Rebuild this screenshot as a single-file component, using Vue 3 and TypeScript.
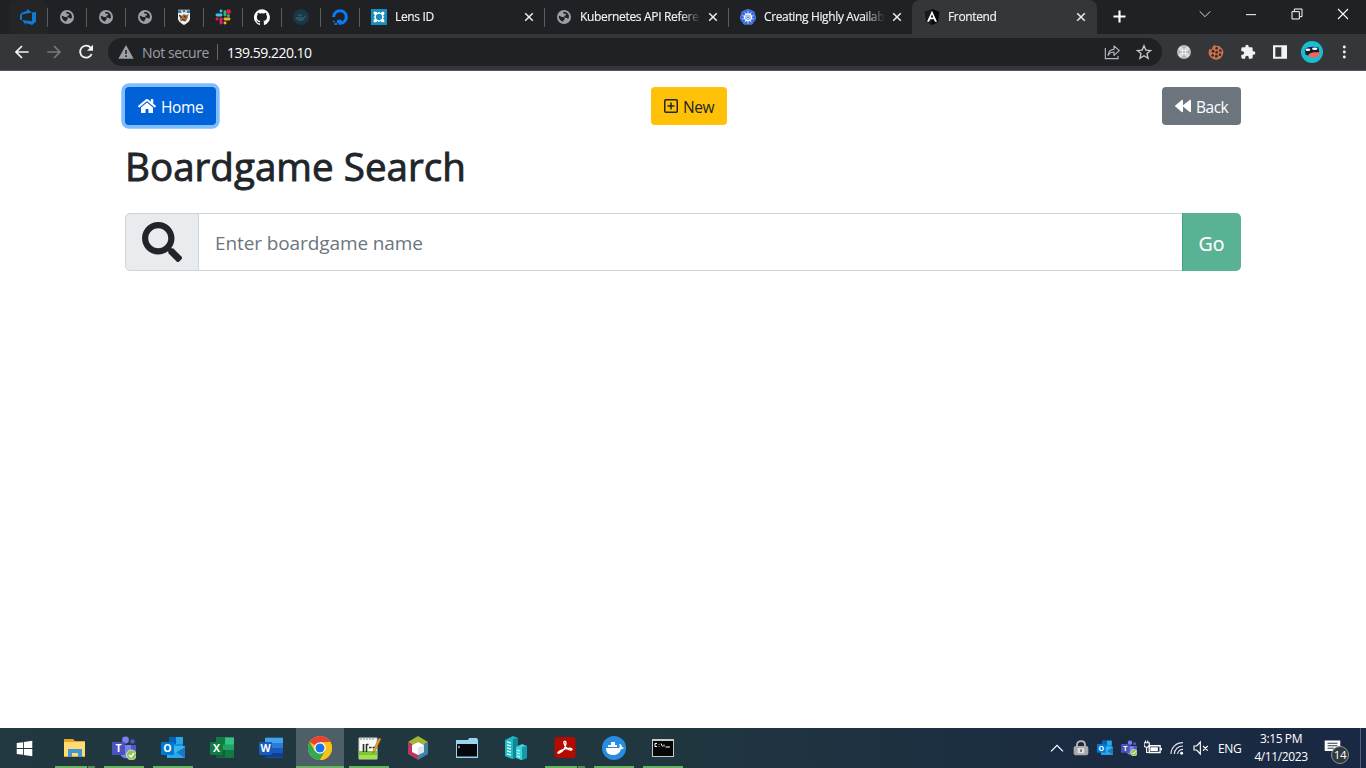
<script setup lang="ts">
interface Tab { icon: string; title: string; active?: boolean; divider?: boolean; width: number; tracking: number }
interface Task { icon: string; state: string }

const tile = (letter: string, fill: string) =>
  `<rect x="0" y="6" width="13" height="13" rx="1" fill="${fill}"/><text x="6.5" y="16.2" font-size="10.5" font-weight="700" font-family="Open Sans, sans-serif" text-anchor="middle" fill="#fff">${letter}</text>`

const globe = '<circle cx="12" cy="12" r="10.5" fill="#9aa0a6"/><path d="M4 10c3 0 4 2 6 2s4 1 3 3-2 1-2 4c-4-1-7-4-7-9zM11 4c-1 3 1 3 3 3s1 3-1 3 0 3 2 3 2 2 4 1c2-5-2-10-8-10z" fill="#202124"/>'

const teamsBody = '<circle cx="13.500" cy="4" r="3.400" fill="#7b83eb"/><circle cx="20.500" cy="5.500" r="2.300" fill="#5059c9"/><path d="M17 9h7v6c0 4-3 5-6 4z" fill="#5059c9"/><path d="M8 9h11v8c0 7-10 7-11 0z" fill="#7b83eb"/>' + tile('T', '#4b53bc') + '<circle cx="19.500" cy="19" r="5" fill="#92c353" stroke="#e8f5da" stroke-width=".8"/><path d="M17 19l2 2 3-4" fill="none" stroke="#fff" stroke-width="1.500"/>'
const outlookBody = '<path d="M8 1h14v13H8z" fill="#1490df"/><path d="M8 1h7v7H8z" fill="#0364b8"/><path d="M15 1h7v7h-7z" fill="#28a8ea"/><path d="M6 10h18v12H6z" fill="#37b5ed"/><path d="M24 11v11H6z" fill="#1a78c9"/><path d="M6 22l9-6 9 6z" fill="#28a8ea"/>' + tile('O', '#0078d4')

const icons: Record<string, string> = {
  devops: '<path d="M0 8.877L2.247 5.910l8.405-3.416V.022l7.370 5.393L2.966 8.338v8.225L0 15.707zm24-4.450v14.651l-5.753 4.900-9.303-3.057v3.056l-5.978-7.416 15.057 1.798V5.415z" fill="#0f7bd6"/>',
  globe,
  crest: '<path d="M3 1h18v13c0 5-5 8-9 10-4-2-9-5-9-10z" fill="#eef1f2"/><path d="M3 2h5v4H3zM10 1h4v4h-4zM16 2h5v4h-5z" fill="#4377a5"/><path d="M5 9l4 1 2-2 5 1 3-2-2 8-3 4-4-2-3 2z" fill="#b36c35"/><path d="M5 9l3 4M12 10l3 3M9 16l5 1" stroke="#343c43" stroke-width="2"/>',
  slack: '<g stroke-width="4.400" stroke-linecap="round"><path d="M3 9h6M9 3h.1" stroke="#36c5f0"/><path d="M15 4v5M20 10h.1" stroke="#2eb67d"/><path d="M15 15h6M15 21h.1" stroke="#ecb22e"/><path d="M9 15v6M3 15h.1" stroke="#e01e5a"/></g><circle cx="20.500" cy="4" r="3.500" fill="#ec1a3a"/>',
  github: '<path fill="#fff" d="M12 .5a12 12 0 0 0-3.800 23.400c.6.100.8-.3.800-.6v-2c-3.300.7-4-1.600-4-1.600-.6-1.400-1.400-1.800-1.400-1.800-1-.7.1-.7.1-.7 1.200.1 1.800 1.200 1.800 1.200 1.100 1.800 2.800 1.300 3.500 1 .1-.8.400-1.300.8-1.600-2.700-.3-5.500-1.300-5.500-5.900 0-1.300.5-2.400 1.200-3.200-.1-.3-.5-1.500.1-3.200 0 0 1-.3 3.300 1.200a11.500 11.500 0 0 1 6 0C17.200 5.200 18.200 5.500 18.200 5.500c.7 1.700.2 2.900.1 3.200.8.800 1.200 1.900 1.200 3.200 0 4.600-2.800 5.600-5.500 5.900.4.400.8 1.100.8 2.200v3.300c0 .3.200.7.800.6A12 12 0 0 0 12 .5z"/>',
  dimwhale: '<circle cx="12" cy="12" r="11" fill="#1b3543" stroke="#204755"/><path d="M4 12h12l2-3 3 2-3 2c-2 8-14 7-14-1zM7 8h7v3H7z" fill="#285566"/>',
  ocean: '<path d="M2.500 12A9.500 9.500 0 1 1 12 21.500V16" fill="none" stroke="#087bf5" stroke-width="4.600"/><path d="M7.500 16.500H12V21H7.500zM4 20.500h3.500V24H4zM1.500 17.500H4V20H1.500z" fill="#087bf5"/>',
  lens: '<rect width="24" height="24" fill="#168fba"/><path d="M4 4h4l2 2 2-2 2 2 3-2h3v4l-2 2 2 2-2 2 2 3v3h-4l-2-2-2 2-2-2-3 2H4v-4l2-2-2-2 2-2-2-3z" fill="#fff"/><circle cx="12" cy="12" r="4.700" fill="#168fba"/>',
  helm: '<path d="M12 0l9 4 3 10-6 9H6l-6-9L3 4z" fill="#326ce5" stroke="#80a9ff" stroke-width=".7"/><circle cx="12" cy="12.500" r="5.200" fill="none" stroke="#fff" stroke-width="1.800"/><path d="M12 3v19M3.500 10l17 5M3.500 15l17-5M7 20l10-15M17 20L7 5" stroke="#fff" stroke-width="1.100"/><circle cx="12" cy="12.500" r="2" fill="#326ce5" stroke="#fff"/>',
  angular: '<path d="M12 0l11 4-2 15-9 5-9-5L1 4z" fill="#17191c"/><path d="M12 0v24l9-5 2-15z" fill="#05090b"/><path d="M12 2.500l7.500 16.500h-3.200l-1.500-3.700H9.200L7.700 19H4.500zM12 8l-1.900 4.700h3.800z" fill="#fff" fill-rule="evenodd"/>',
  close: '<path d="M5.500 5.500l13 13M18.500 5.500l-13 13" fill="none" stroke="currentColor" stroke-width="2.600"/>',
  plus: '<path d="M12 3.500v17M3.500 12h17" stroke="#fff" stroke-width="3"/>',
  down: '<path d="M4 8l8 8 8-8" fill="none" stroke="#d6d7d9" stroke-width="1.500"/>',
  minimize: '<path d="M4.500 13h15" stroke="#fff" stroke-width="1.500"/>',
  restore: '<path d="M4.500 8.500h11v11h-11zM8 8V4.500h11.500V16H16" fill="none" stroke="#fff" stroke-width="1.500"/>',
  closewin: '<path d="M4.500 4.500l15 15M19.500 4.500l-15 15" stroke="#fff" stroke-width="1.600"/>',
  back: '<path d="M22 12H3M12 3l-9 9 9 9" fill="none" stroke="currentColor" stroke-width="2.600"/>',
  forward: '<path d="M2 12h19M12 3l9 9-9 9" fill="none" stroke="currentColor" stroke-width="2.600"/>',
  reload: '<path d="M20.500 15a9 9 0 1 1-1.500-9.500L21 8" fill="none" stroke="#f1f3f4" stroke-width="2.800"/><path d="M22.500 1v9h-9z" fill="#f1f3f4"/>',
  warning: '<path d="M12 1.500L23.500 22H.5z" fill="#9aa0a6"/><path d="M12 9v6M12 17v2.500" stroke="#202124" stroke-width="2.300"/>',
  share: '<path d="M2 6v16h19v-4" fill="none" stroke="currentColor" stroke-width="1.700"/><path d="M6 17c1-6 4-9 9-9V3l8 7-8 7v-5c-4 0-7 2-9 5z" fill="none" stroke="currentColor" stroke-width="1.700" stroke-linejoin="round"/>',
  star: '<path d="M12 2.500l2.800 6.600 7.200.6-5.500 4.700 1.700 7-6.200-3.700-6.200 3.700 1.700-7L2 9.700l7.200-.6z" fill="none" stroke="currentColor" stroke-width="2"/>',
  command: '<circle cx="12" cy="12" r="10.500" fill="#b8babd"/><path d="M9.500 9.500h5v5h-5zM9.500 9.500H8A2 2 0 1 1 9.500 8zM14.500 9.500H16A2 2 0 1 0 14.500 8zM9.500 14.500H8A2 2 0 1 0 9.500 16zM14.500 14.500H16a2 2 0 1 1-1.500 1.500z" fill="none" stroke="#fff" stroke-width="1.400"/>',
  cookie: '<path d="M10 1c2 4 5 0 8 3s5 4 5 8a11 11 0 1 1-21-4l4 0 1-4z" fill="#cb7350"/><g fill="#3b2b29"><circle cx="13" cy="6.500" r="2"/><circle cx="18.500" cy="10" r="2"/><circle cx="7.500" cy="11" r="2.200"/><circle cx="13" cy="12.500" r="2"/><circle cx="7" cy="17" r="2"/><circle cx="12.500" cy="18.500" r="2.200"/><circle cx="18" cy="16" r="2"/></g>',
  puzzle: '<path d="M20.500 11H19V7a2 2 0 0 0-2-2h-4V3.500a2.500 2.500 0 0 0-5 0V5H4a2 2 0 0 0-2 2v3.800h1.500a2.700 2.700 0 0 1 0 5.400H2V20a2 2 0 0 0 2 2h3.800v-1.500a2.700 2.700 0 0 1 5.400 0V22H17a2 2 0 0 0 2-2v-4h1.500a2.500 2.500 0 0 0 0-5z" fill="#f1f3f4"/>',
  panel: '<path d="M1.500 2h21v20h-21zM5 5v14h9V5z" fill="#f1f3f4" fill-rule="evenodd"/>',
  avatar: '<circle cx="12" cy="12" r="12" fill="#19bfd0"/><path d="M4 9c4-3 10-3 15-2l1 6-8 4-7-2z" fill="#17192d"/><ellipse cx="7.500" cy="9.500" rx="2.700" ry="1.300" fill="#fff"/><ellipse cx="15" cy="8.500" rx="3" ry="1.300" fill="#fff"/><path d="M8 15c4-4 8-2 13-3 0 4-5 7-9 6-2 0-4-1-4-3z" fill="#f56556"/>',
  dots: '<circle cx="12.500" cy="4.500" r="2.200" fill="#f1f3f4"/><circle cx="12.500" cy="12" r="2.200" fill="#f1f3f4"/><circle cx="12.500" cy="19.500" r="2.200" fill="#f1f3f4"/>',
  windows: '<path d="M1 4.400l9-1.300v8.300H1zM11.200 2.900L23 1v10.400H11.200zM1 12.600h9v8.300l-9-1.300zM11.200 12.600H23V23l-11.800-1.900z" fill="#fff"/>',
  folder: '<path d="M1 3h9l2 2h10v16H1z" fill="#e5a624"/><path d="M1 6h21v14H1z" fill="#ffdb72"/><path d="M5 13h14v8h-4v-4H9v4H5z" fill="#3d98d5"/>',
  teams: teamsBody,
  outlook: outlookBody,
  excel: '<rect x="6" y="1.500" width="18" height="20" rx="1" fill="#21a366"/><path d="M6 1.500h9v7H6z" fill="#107c41"/><path d="M15 1.500h9v7h-9z" fill="#33c481"/><path d="M6 14h18v7.500H6z" fill="#185c37"/><path d="M15 14h9v7.500h-9z" fill="#107c41"/>' + tile('X', '#107c41'),
  word: '<rect x="6" y="1.500" width="18" height="20" rx="1" fill="#2b7cd3"/><path d="M6 2h18v5H6z" fill="#41a5ee"/><path d="M6 12h18v5H6z" fill="#185abd"/><path d="M6 17h18v4.500H6z" fill="#103f91"/>' + tile('W', '#185abd'),
  chrome: '<circle cx="12" cy="12" r="12" fill="#fbc116"/><path d="M12 12L1.600 6A12 12 0 0 1 22.400 6H12z" fill="#ea4335"/><path d="M1.600 6A12 12 0 0 0 12 24l5.200-9L12 12 6.800 15z" fill="#34a853"/><path d="M12 6h10.400A12 12 0 0 1 12 24l5.200-9z" fill="#fbc116"/><circle cx="12" cy="12" r="5.800" fill="#fff"/><circle cx="12" cy="12" r="4.500" fill="#1a73e8"/>',
  notepad: '<path d="M2 2h18v21H2z" fill="#f7faf3" stroke="#ccd3ca"/><path d="M2 15h18v8H2z" fill="#78c833"/><path d="M2 19h18v4H2z" fill="#a6df4c"/><path d="M4 1v3M7 1v3M10 1v3M13 1v3M16 1v3" stroke="#89968f"/><path d="M6.500 8v8M9.500 8v8M9.500 8.500h2M12 11.500h2.500M15.500 11.500H18" fill="none" stroke="#27342a" stroke-width="1.600"/><path d="M22 2l2 1-6 12-2 2 .4-3z" fill="#f5a52c" stroke="#9d5a20" stroke-width=".6"/>',
  cube: '<path d="M12 0l10 6-5 3-5-3-5 3-5-3z" fill="#a4b62e"/><path d="M2 6l5 3v7l5 3v5L2 18z" fill="#bd365e"/><path d="M22 6l-5 3v7l-5 3v5l10-6z" fill="#3e82aa"/><path d="M12 6l6 3v7l-6 3-6-3V9z" fill="#fff"/><path d="M12 12l6-3v7l-6 3z" fill="#dce5e9"/>',
  terminal: '<path d="M1 4h12l1-2h8l1 2v18H1z" fill="#9bd2f2"/><path d="M2 8h20v12.500H2z" fill="#05080b"/><path d="M3 10l2 1-2 1" stroke="#aaa" fill="none"/>',
  servers: '<path d="M1 4l8-4 5 2v19l-6 2-7-3z" fill="#20b8c5"/><path d="M9 3l5-1v19l-5 2z" fill="#0f8795"/><path d="M12 11l6-3 5 2v12l-6 2-5-2z" fill="#3bd4dc"/><path d="M18 11l5-1v12l-5 2z" fill="#139aaa"/><path d="M3 6l4 1M3 9l4 1M3 12l4 1M3 15l4 1M3 18l4 1M13 14l3 1M13 17l3 1M13 20l3 1" stroke="#d9ffff" stroke-width="1.300"/>',
  acrobat: '<rect x="1.500" y="1" width="21" height="21" rx="3" fill="#b30b00"/><path d="M6 17c4-1 7-6 7-10 0-2.500-2.500-2.500-2 0 1 4 4 6.500 6.500 7 2 .2 2-1.700-.5-1.700-4 0-7 1-10 2.500-2.500 1.500-2.500 3-1 2.200z" fill="none" stroke="#fff" stroke-width="1.400"/>',
  docker: '<circle cx="12" cy="12" r="12" fill="#278de0"/><path d="M4 12h13c1-1 1-3 0-4 2-.5 3 2 3 3l2 1c-1 1-2 1-3 1-1 4-4 6-8 6s-7-2-7-7zM6 9h9v2H6zM9 6h4v3H9z" fill="#fff"/>',
  command2: '<path d="M1 3h22v18H1z" fill="#c9c9c9"/><path d="M2 5h20v15H2z" fill="#060606"/><path d="M6 7.500H4v3h2M8 8v.7M8 10v.7M10 7.500l1.500 3M13 8.500v2M14.500 11H19" stroke="#fff" fill="none"/>',
  up: '<path d="M3 17l9-9 9 9" fill="none" stroke="#fff" stroke-width="1.900"/>',
  lock: '<path d="M6 11V7c0-7 12-7 12 0v4" fill="none" stroke="#b8b8b8" stroke-width="2.800"/><rect x="1" y="9" width="22" height="14" rx="3" fill="#aaa9a7"/><rect x="7" y="12" width="10" height="8" rx="1" fill="#ddd"/><path d="M12 14v4" stroke="#696969" stroke-width="2.500"/>',
  battery: '<path d="M7 9h14.500v9H7z" fill="none" stroke="#fff" stroke-width="1.700"/><path d="M8.500 11h10v5h-10zM22 12h2v3h-2z" fill="#fff"/><path d="M0 5h7v3c0 4-7 4-7 0zM2 2v3M5 2v3M3.500 11v7H8" fill="none" stroke="#fff" stroke-width="1.500"/>',
  wifi: '<g fill="none" stroke="#e2e7ee" stroke-width="1.700"><path d="M3 21C3 11 11 4 21 4M8 21c0-7 6-12 13-12M13 21c0-4 4-7 8-7"/></g><circle cx="19" cy="20" r="2.200" fill="#fff"/>',
  muted: '<path d="M1.500 9h4L11 3v18l-5.500-6h-4zM15 9l7 7M22 9l-7 7" fill="none" stroke="#fff" stroke-width="1.700"/>',
  notice: '<path d="M1 2h22v15h-7v5l-5-5H1z" fill="#fff"/><path d="M5 6h14M5 9.500h14M5 13h9" stroke="#1b2b41" stroke-width="1.300"/>',
}

const pinned = ['devops', 'globe', 'globe', 'globe', 'crest', 'slack', 'github', 'dimwhale', 'ocean']
const tabs: Tab[] = [
  { icon: 'lens', title: 'Lens ID', divider: true, width: 185, tracking: -0.35 },
  { icon: 'globe', title: 'Kubernetes API Refere', divider: true, width: 184, tracking: -0.33 },
  { icon: 'helm', title: 'Creating Highly Availab', width: 183, tracking: -0.36 },
  { icon: 'angular', title: 'Frontend', active: true, width: 185, tracking: -0.35 },
]
const tasks: Task[] = [
  { icon: 'folder', state: 'open multiple' }, { icon: 'teams', state: 'open' },
  { icon: 'outlook', state: 'open' }, { icon: 'excel', state: '' }, { icon: 'word', state: '' },
  { icon: 'chrome', state: 'open current' }, { icon: 'notepad', state: 'open' },
  { icon: 'cube', state: '' }, { icon: 'terminal', state: '' }, { icon: 'servers', state: '' },
  { icon: 'acrobat', state: 'open multiple' }, { icon: 'docker', state: 'open' }, { icon: 'command2', state: 'open' },
]
const windowControls = ['down', 'minimize', 'restore', 'closewin']
const extensions = ['command', 'cookie', 'puzzle', 'panel', 'avatar', 'dots']
const tray = ['up', 'lock', 'outlook', 'teams', 'battery', 'wifi', 'muted']
</script>

<template>
  <div class="screen">
    <header class="tabstrip">
      <div v-for="(p, i) in pinned" :key="i" class="pinned" :class="{ first: i === 0 }">
        <svg viewBox="0 0 24 24" class="favicon" v-html="icons[p]"></svg>
      </div>
      <div v-for="t in tabs" :key="t.title" class="tab" :class="{ active: t.active, divider: t.divider }" :style="{ width: t.width + 'px' }">
        <svg viewBox="0 0 24 24" class="favicon" v-html="icons[t.icon]"></svg>
        <span class="tab-title" :style="{ letterSpacing: t.tracking + 'px' }">{{ t.title }}</span>
        <svg viewBox="0 0 24 24" class="tab-close" v-html="icons.close"></svg>
      </div>
      <svg viewBox="0 0 24 24" class="new-tab" v-html="icons.plus"></svg>
      <div class="window-controls">
        <div v-for="c in windowControls" :key="c" class="control"><svg viewBox="0 0 24 24" v-html="icons[c]"></svg></div>
      </div>
    </header>

    <nav class="toolbar">
      <svg viewBox="0 0 24 24" class="nav-icon" v-html="icons.back"></svg>
      <svg viewBox="0 0 24 24" class="nav-icon disabled" v-html="icons.forward"></svg>
      <svg viewBox="0 0 24 24" class="nav-icon" v-html="icons.reload"></svg>
      <div class="address">
        <svg viewBox="0 0 24 24" class="warn" v-html="icons.warning"></svg>
        <span class="insecure">Not secure</span>
        <span class="rule"></span>
        <span class="url">139.59.220.10</span>
        <svg viewBox="0 0 24 24" class="share" v-html="icons.share"></svg>
        <svg viewBox="0 0 24 24" class="star" v-html="icons.star"></svg>
      </div>
      <div class="extensions">
        <div v-for="e in extensions" :key="e" class="ext" :class="e"><svg viewBox="0 0 24 24" v-html="icons[e]"></svg></div>
      </div>
    </nav>

    <main class="page">
      <div class="actions">
        <button class="btn home">
          <svg viewBox="0 0 576 512" width="18" height="16"><path fill="currentColor" d="M280 148L96 300v164a16 16 0 0 0 16 16h112a16 16 0 0 0 16-16v-96a16 16 0 0 1 16-16h64a16 16 0 0 1 16 16v96a16 16 0 0 0 16 16h112a16 16 0 0 0 16-16V300L296 148a12 12 0 0 0-16 0zM572 251l-84-69V44a12 12 0 0 0-12-12h-56a12 12 0 0 0-12 12v72l-90-74a48 48 0 0 0-61 0L4 251a12 12 0 0 0-1 17l25 31a12 12 0 0 0 17 2L280 107a12 12 0 0 1 16 0l235 194a12 12 0 0 0 17-2l25-31a12 12 0 0 0-1-17z" /></svg>
          <span>Home</span>
        </button>
        <button class="btn new">
          <svg viewBox="0 0 14 16" width="14" height="16"><rect x=".75" y="1.750" width="12.500" height="12.500" rx="1" fill="none" stroke="currentColor" stroke-width="1.500" /><path d="M7 4.500v7M3.500 8h7" stroke="currentColor" stroke-width="1.500" /></svg>
          <span>New</span>
        </button>
        <button class="btn back">
          <svg viewBox="0 0 16 16" width="16" height="16"><path fill="currentColor" d="M.3 7.400L6.700 2c.5-.4 1.300 0 1.300.6v4.700L14.700 2c.5-.4 1.300 0 1.300.6v10.800c0 .7-.8 1-1.300.6L8 8.600v4.800c0 .7-.8 1-1.300.6L.3 8.600a.8.800 0 0 1 0-1.200z" /></svg>
          <span>Back</span>
        </button>
      </div>
      <h1>Boardgame Search</h1>
      <div class="search">
        <div class="prefix">
          <svg viewBox="0 0 512 512" width="40" height="40"><path fill="currentColor" d="M505 442.700L405.300 343c-4.500-4.500-10.600-7-17-7H372c27.600-35.300 44-79.700 44-128C416 93.100 322.900 0 208 0S0 93.100 0 208s93.100 208 208 208c48.300 0 92.700-16.400 128-44v16.300c0 6.400 2.500 12.500 7 17l99.700 99.700c9.400 9.400 24.600 9.400 33.900 0l28.300-28.300c9.400-9.400 9.400-24.600.1-34zM208 336c-70.700 0-128-57.200-128-128 0-70.700 57.200-128 128-128 70.700 0 128 57.200 128 128 0 70.700-57.200 128-128 128z" /></svg>
        </div>
        <div class="field"><span>Enter boardgame name</span></div>
        <button class="go">Go</button>
      </div>
    </main>

    <footer class="taskbar">
      <div class="start"><svg viewBox="0 0 24 24" v-html="icons.windows"></svg></div>
      <div v-for="t in tasks" :key="t.icon" class="task" :class="t.state"><svg viewBox="0 0 24 24" v-html="icons[t.icon]"></svg></div>
      <div class="tray">
        <div v-for="t in tray" :key="t" class="tray-icon" :class="t"><svg viewBox="0 0 24 24" v-html="icons[t]"></svg></div>
        <span class="lang">ENG</span>
        <div class="clock"><span>3:15 PM</span><span>4/11/2023</span></div>
        <div class="notice"><svg viewBox="0 0 24 24" v-html="icons.notice"></svg><span class="badge">14</span></div>
      </div>
    </footer>
  </div>
</template>

<style>
body { margin: 0; overflow: hidden; }
</style>

<style scoped>
* { box-sizing: border-box; }
.screen { width: 1366px; height: 768px; display: flex; flex-direction: column; background: #fff; overflow: hidden; font-family: "Open Sans", "Noto Sans", sans-serif; }
svg { display: block; flex: none; }
button { font-family: inherit; }
.tabstrip { height: 34px; flex: none; display: flex; background: #202124; padding-left: 9px; }
.pinned { width: 39px; height: 34px; padding-right: 1px; display: flex; align-items: center; justify-content: center; background: linear-gradient(#5b5c5f, #5b5c5f) right 8px / 1px 19px no-repeat; }
.pinned.first { background-color: #242527; border-radius: 8px 8px 0 0; }
.favicon { width: 16px; height: 16px; }
.tab { height: 34px; display: flex; align-items: center; padding: 0 8px 0 11px; color: #f1f2f4; font-size: 12px; }
.tab.divider { padding-right: 9px; background: linear-gradient(#5b5c5f, #5b5c5f) right 8px / 1px 19px no-repeat; }
.tab.active { padding: 0 9px 0 12px; background: #35363a; border-radius: 8px 8px 0 0; }
.tab-title { margin-left: 8px; width: 121px; white-space: nowrap; line-height: 20px; mask-image: linear-gradient(90deg, #000 100px, transparent 121px); -webkit-text-stroke: .15px currentColor; }
.tab-close { width: 14px; height: 14px; margin-left: auto; color: #e8eaed; }
.new-tab { width: 17px; height: 17px; margin: 8px 0 0 14px; }
.window-controls { display: flex; margin-left: auto; }
.control { width: 46px; height: 28px; display: flex; align-items: center; justify-content: center; }
.control svg { width: 16px; height: 16px; }
.toolbar { height: 37px; flex: none; display: flex; align-items: center; background: #35363a; border-bottom: 1px solid #55565a; padding-left: 14px; }
.nav-icon { width: 16px; height: 16px; margin-right: 16px; color: #f1f3f4; }
.nav-icon.disabled { color: #77797d; }
.address { width: 1054px; height: 28px; margin-left: -2px; display: flex; align-items: center; border-radius: 14px; background: #202124; padding: 0 10px; font-size: 14px; }
.warn { width: 16px; height: 16px; }
.insecure { color: #9aa0a6; margin-left: 8px; width: 67px; white-space: nowrap; letter-spacing: -.4px; }
.rule { width: 1px; height: 16px; background: #66686b; margin: 0 9px 0 8px; }
.url { color: #fff; letter-spacing: -.5px; }
.share { width: 16px; height: 16px; margin-left: auto; color: #b5b8bc; }
.star { width: 16px; height: 16px; margin-left: 16px; color: #c7c9cc; }
.extensions { display: flex; margin-left: 6px; }
.ext { width: 32px; height: 32px; display: flex; align-items: center; justify-content: center; }
.ext svg { width: 16px; height: 16px; }
.ext.avatar svg { width: 22px; height: 22px; }
.page { flex: 1; padding: 16px 125px 0; color: #212529; }
.actions { display: flex; justify-content: space-between; height: 38px; }
.btn { height: 38px; display: flex; align-items: center; padding: 0 13px; gap: 5px; border: 0; border-radius: 4px; font-size: 15.5px; line-height: 24px; color: #fff; white-space: nowrap; }
.btn span { padding-top: 1px; }
.btn.home { width: 91px; background: #0062d9; box-shadow: 0 0 0 3.700px #80bdff; letter-spacing: -.35px; }
.btn.new { width: 76px; background: #ffc107; color: #212529; letter-spacing: -.4px; }
.btn.back { width: 79px; background: #6c757d; letter-spacing: -.5px; }
h1 { margin: 18px 0 0; height: 48px; line-height: 47px; font-size: 38.5px; font-weight: 400; letter-spacing: .05px; white-space: nowrap; -webkit-text-stroke: .9px currentColor; }
.search { display: flex; margin-top: 22px; height: 58px; }
.prefix { width: 74px; display: flex; align-items: center; justify-content: center; background: #e9ecef; border: 1px solid #ced4da; border-radius: 5px 0 0 5px; }
.field { flex: 1; display: flex; align-items: center; padding: 1px 16px 0; border: 1px solid #ced4da; border-left: 0; border-right: 0; color: #6c757d; font-size: 19px; letter-spacing: -.1px; }
.go { width: 59px; padding: 2px 1px 0 0; border: 0; border-left: 1px solid #46a080; border-radius: 0 5px 5px 0; background: #59b293; color: #fff; font-size: 19.5px; -webkit-text-stroke: .2px currentColor; }
.taskbar { height: 40px; flex: none; display: flex; background: linear-gradient(90deg, #213840 0%, #20373f 48%, #1b2b42 80%, #1a2943 100%); }
.start { width: 50px; display: flex; align-items: center; justify-content: center; padding-right: 2px; }
.start svg { width: 17px; height: 17px; }
.task { width: 49px; height: 40px; display: flex; align-items: center; justify-content: center; }
.task svg { width: 24px; height: 24px; }
.task.open { background: linear-gradient(#65b45d, #65b45d) center bottom / 40px 2px no-repeat; }
.task.multiple { background: linear-gradient(90deg, #65b45d 32px, #294737 32px, #294737 33px, #508e4e 33px) center bottom / 40px 2px no-repeat; }
.task.current { background: linear-gradient(#65b45d, #65b45d) center bottom / 48px 2px no-repeat, linear-gradient(#4d6067, #4d6067) center / 48px 40px no-repeat; }
.tray { display: flex; align-items: center; margin-left: auto; color: #fff; }
.tray-icon { width: 24px; height: 40px; display: flex; align-items: center; justify-content: center; }
.tray-icon svg { width: 16px; height: 16px; }
.tray-icon.battery svg { width: 18px; height: 18px; }
.lang { width: 36px; padding-left: 5px; font-size: 12px; letter-spacing: -.35px; }
.clock { width: 64px; display: flex; flex-direction: column; align-items: center; font-size: 12px; line-height: 18px; letter-spacing: -.4px; white-space: nowrap; }
.notice { position: relative; width: 48px; height: 40px; border-right: 1px solid #52617a; margin-right: 5px; padding: 11px 0 0 11px; }
.notice svg { width: 17px; height: 17px; }
.badge { position: absolute; left: 18px; top: 18px; width: 18px; height: 18px; line-height: 16px; border-radius: 50%; border: 1px solid #8a939c; background: #34393e; text-align: center; font-size: 11.5px; letter-spacing: -.4px; }
</style>
